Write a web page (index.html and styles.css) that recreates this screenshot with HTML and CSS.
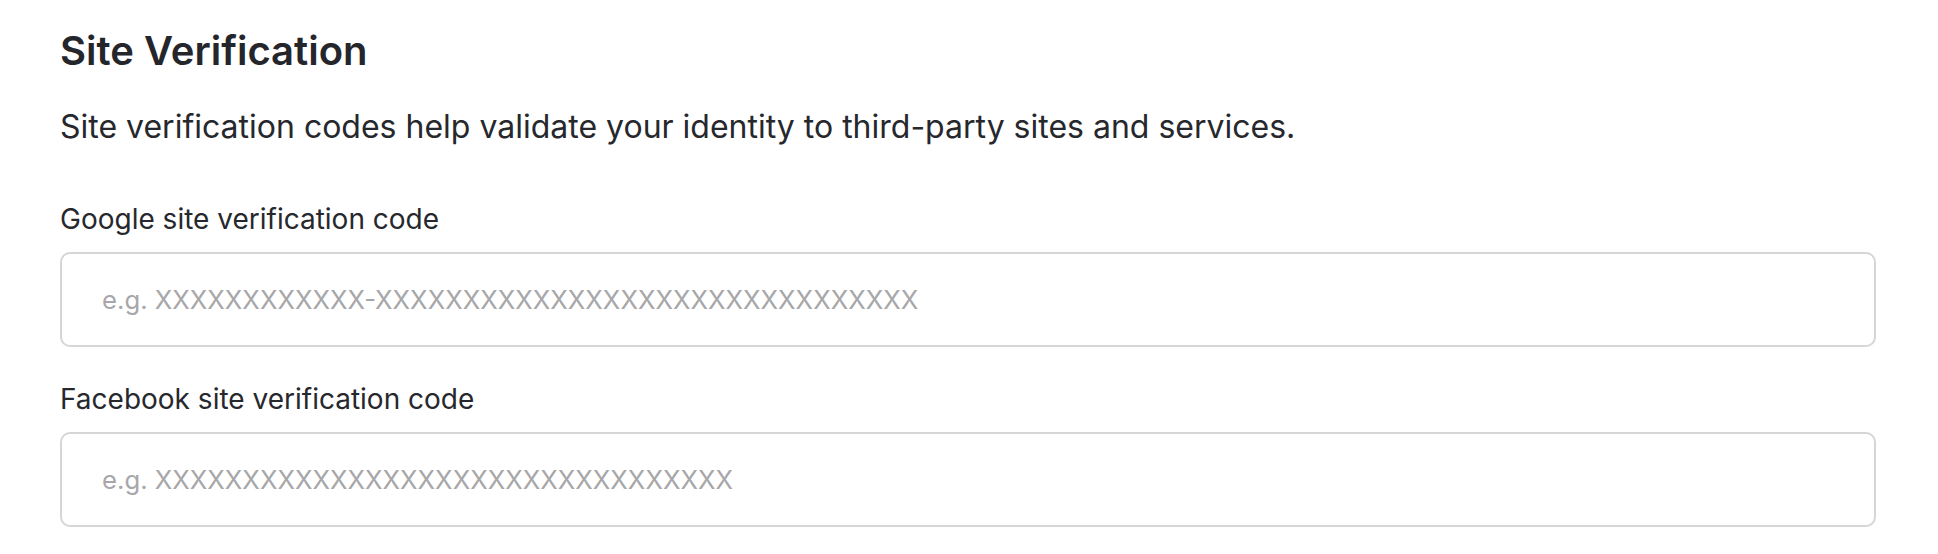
FILE: index.html
```html
<!DOCTYPE html>
<html lang="en">
<head>
<meta charset="utf-8">
<title>Site Verification</title>
<link rel="stylesheet" href="styles.css">
</head>
<body>
<section class="panel">
  <h2 class="title">Site Verification</h2>
  <p class="desc">Site verification codes help validate your identity to third-party sites and services.</p>
  <div class="field">
    <label class="label" for="google">Google site verification code</label>
    <input class="input" id="google" type="text" placeholder="e.g. XXXXXXXXXXXX-XXXXXXXXXXXXXXXXXXXXXXXXXXXXXXX">
  </div>
  <div class="field">
    <label class="label" for="facebook">Facebook site verification code</label>
    <input class="input" id="facebook" type="text" placeholder="e.g. XXXXXXXXXXXXXXXXXXXXXXXXXXXXXXXXX">
  </div>
</section>
</body>
</html>
```

FILE: styles.css
```css
html, body {
  margin: 0;
  padding: 0;
  background: #ffffff;
}
body {
  font-family: Inter, "Liberation Sans", sans-serif;
  color: #26282d;
}
.panel {
  padding: 27px 62px 0 60px;
  display: flex;
  flex-direction: column;
}
.title {
  margin: 0;
  font-size: 40px;
  line-height: 48px;
  font-weight: 600;
  color: #24262b;
}
.desc {
  margin: 30px 0 0;
  font-size: 32px;
  line-height: 44px;
  font-weight: 400;
}
.field {
  display: flex;
  flex-direction: column;
  margin-top: 52px;
}
.field + .field {
  margin-top: 34px;
}
.label {
  font-size: 28px;
  line-height: 36px;
  margin-bottom: 15px;
}
.input {
  box-sizing: border-box;
  width: 100%;
  height: 95px;
  border: 2px solid #d6d6d6;
  border-radius: 10px;
  padding: 0 40px;
  font-family: Inter, "Liberation Sans", sans-serif;
  font-size: 25.7px;
  color: #26282d;
  background: #fff;
  outline: none;
}
.input::placeholder {
  color: #a7a7a9;
}
```
